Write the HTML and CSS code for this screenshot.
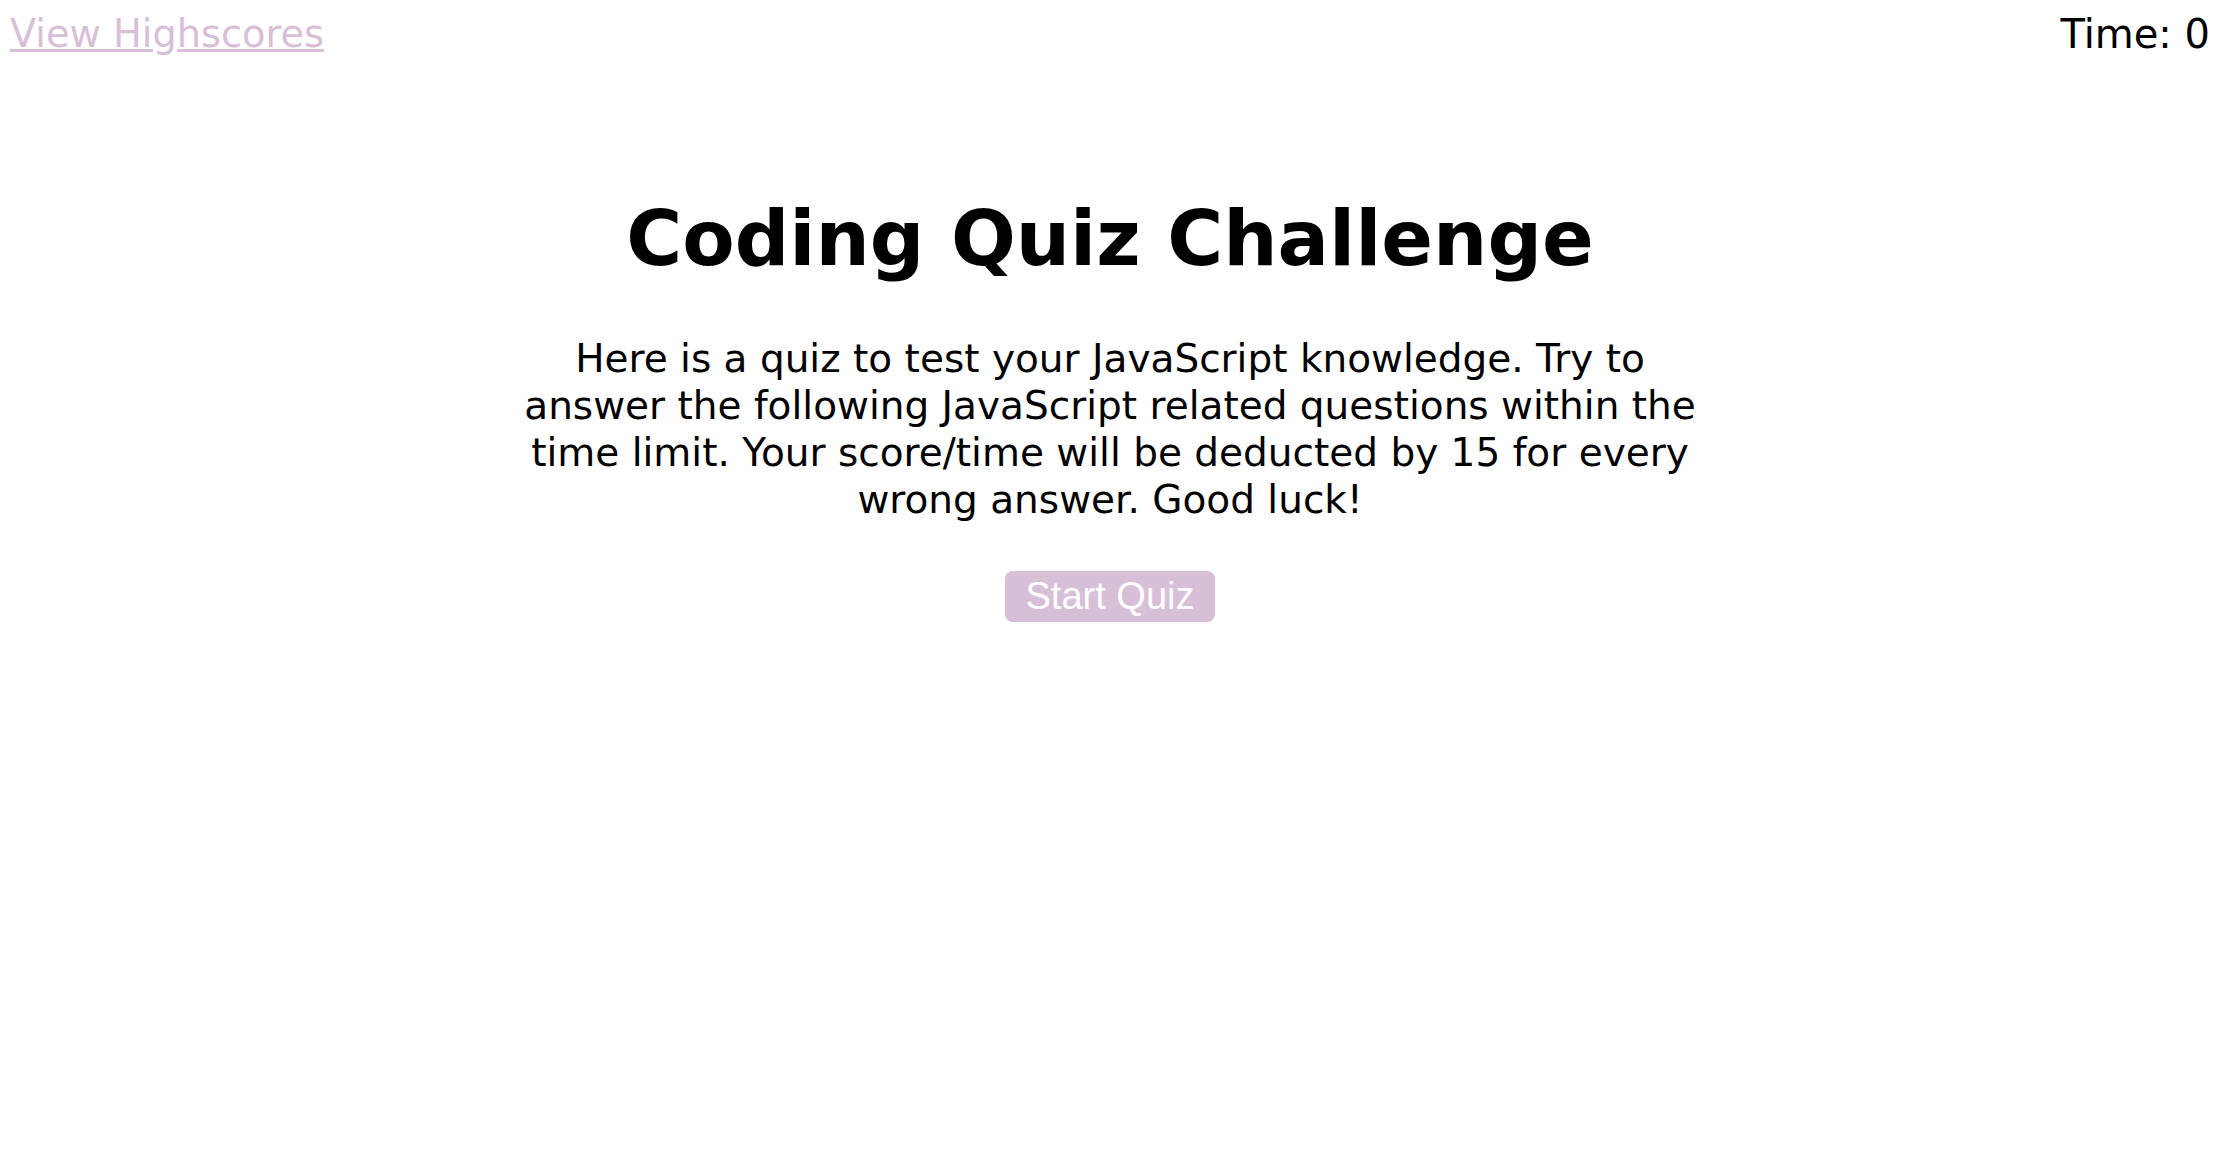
FILE: index.html
```html
<!DOCTYPE html>
<html lang="en">
<head>
<meta charset="utf-8">
<title>Coding Quiz Challenge</title>
<link rel="stylesheet" href="styles.css">
</head>
<body>
<header class="top-bar">
  <a class="highscores-link" href="#">View Highscores</a>
  <div class="timer">Time: 0</div>
</header>
<main class="intro">
  <h1 class="intro-title">Coding Quiz Challenge</h1>
  <p class="intro-text">Here is a quiz to test your JavaScript knowledge. Try to answer the following JavaScript related questions within the time limit. Your score/time will be deducted by 15 for every wrong answer. Good luck!</p>
  <button class="start-button" type="button">Start Quiz</button>
</main>
</body>
</html>
```
FILE: styles.css
```css
html, body {
  margin: 0;
  padding: 0;
  background: #ffffff;
}
body {
  font-family: "DejaVu Sans", Verdana, sans-serif;
  color: #000000;
}
.top-bar {
  display: flex;
  justify-content: space-between;
  align-items: flex-start;
  padding: 12px 10px 0 10px;
}
.highscores-link {
  font-size: 38.3px;
  line-height: 44px;
  color: #d8bfd8;
  text-decoration: underline;
}
.timer {
  font-size: 40px;
  line-height: 44px;
}
.intro {
  display: flex;
  flex-direction: column;
  align-items: center;
  text-align: center;
  max-width: 1200px;
  margin: 0 auto;
}
.intro-title {
  font-size: 76.3px;
  font-weight: bold;
  margin: 137px 0 0 0;
  line-height: 1.2;
}
.intro-text {
  font-size: 39px;
  line-height: 47px;
  margin: 50px 0 0 0;
}
.start-button {
  margin-top: 48px;
  width: 210px;
  height: 51px;
  background: #d8bfd8;
  color: #ffffff;
  border: none;
  border-radius: 8px;
  font-family: "Liberation Sans", Arial, sans-serif;
  font-size: 38px;
  padding: 0;
}
```
